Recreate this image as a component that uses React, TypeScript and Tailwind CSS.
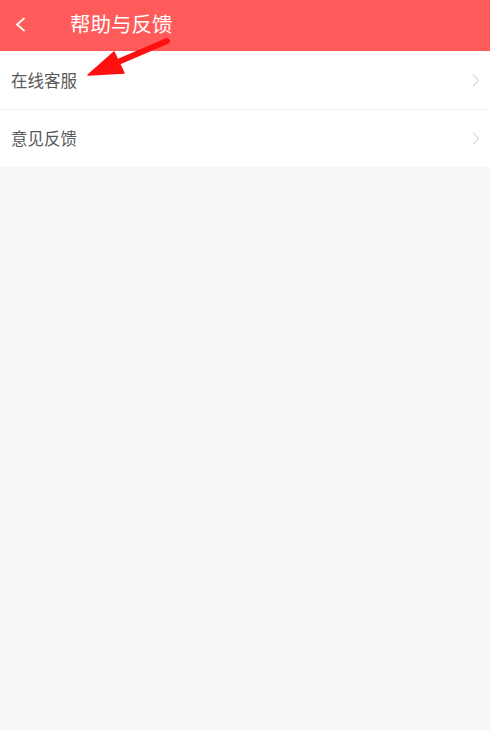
import React from "react";

const Chevron = () => (
  <svg width="8" height="13" viewBox="0 0 8 13" className="shrink-0">
    <path d="M1.5 1 L6.5 6.5 L1.5 12" fill="none" stroke="#cfcfcf" strokeWidth="1.1" strokeLinecap="round" strokeLinejoin="round" />
  </svg>
);

export default function App() {
  const font = { fontFamily: '"Noto Sans CJK SC", "Noto Sans", sans-serif' };
  return (
    <div className="relative w-[490px] h-[731px] bg-[#f8f7fa] overflow-hidden" style={font}>
      <div className="h-[51px] bg-[#ff5b5b] flex items-center">
        <div className="w-[70px] h-full flex items-center pl-[15px] -mt-[2px]">
          <svg width="11" height="15" viewBox="0 0 11 15">
            <path d="M9 1.5 L2 7.5 L9 13.5" fill="none" stroke="#ffffff" strokeWidth="1.8" strokeLinecap="round" strokeLinejoin="round" />
          </svg>
        </div>
        <div className="text-white text-[20.5px] leading-none -mt-[5px]">帮助与反馈</div>
      </div>
      <div className="bg-white">
        <div className="h-[59px] flex items-center justify-between pl-[11px] pr-[10px] border-b border-[#f0f0f0]">
          <span className="text-[16.5px] text-[#585858]">在线客服</span>
          <Chevron />
        </div>
        <div className="h-[57px] flex items-center justify-between pl-[11px] pr-[10px]">
          <span className="text-[16.5px] text-[#585858]">意见反馈</span>
          <Chevron />
        </div>
      </div>
      <svg className="absolute left-0 top-0 pointer-events-none" width="490" height="120" viewBox="0 0 490 120">
        <line x1="167" y1="41" x2="118" y2="62" stroke="#ff1010" strokeWidth="6" strokeLinecap="round" />
        <polygon points="88,75 114,52 124,73" fill="#ff1010" stroke="#ff1010" strokeWidth="1.5" strokeLinejoin="round" />
      </svg>
    </div>
  );
}
